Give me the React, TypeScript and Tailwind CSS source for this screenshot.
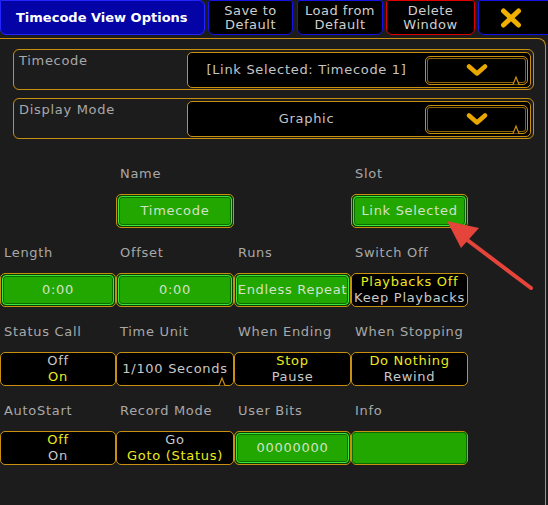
import type { ReactNode } from "react";

const FONT = { fontFamily: '"DejaVu Sans", "Noto Sans", sans-serif' };

type Cell =
  | null
  | { label: string; kind: "green"; text: string }
  | { label: string; kind: "info" }
  | { label: string; kind: "black"; lines: [string, boolean][]; notch?: boolean };

const Y = true;
const G = false;

const ROWS: Cell[][] = [
  [
    null,
    { label: "Name", kind: "green", text: "Timecode" },
    null,
    { label: "Slot", kind: "green", text: "Link Selected" },
  ],
  [
    { label: "Length", kind: "green", text: "0:00" },
    { label: "Offset", kind: "green", text: "0:00" },
    { label: "Runs", kind: "green", text: "Endless Repeat" },
    { label: "Switch Off", kind: "black", lines: [["Playbacks Off", Y], ["Keep Playbacks", G]] },
  ],
  [
    { label: "Status Call", kind: "black", lines: [["Off", G], ["On", Y]] },
    { label: "Time Unit", kind: "black", lines: [["1/100 Seconds", G]], notch: true },
    { label: "When Ending", kind: "black", lines: [["Stop", Y], ["Pause", G]] },
    { label: "When Stopping", kind: "black", lines: [["Do Nothing", Y], ["Rewind", G]] },
  ],
  [
    { label: "AutoStart", kind: "black", lines: [["Off", Y], ["On", G]] },
    { label: "Record Mode", kind: "black", lines: [["Go", G], ["Goto (Status)", Y]] },
    { label: "User Bits", kind: "green", text: "00000000" },
    { label: "Info", kind: "info" },
  ],
];

function Notch() {
  return (
    <svg className="absolute -bottom-px right-[6px]" width="10" height="10" viewBox="0 0 10 10">
      <path d="M0 9.5 H2 L5 2 L8 9.5 H10" fill="#000" stroke="#c99010" strokeWidth="1.2" />
    </svg>
  );
}

function Chevron() {
  return (
    <svg width="22" height="14" viewBox="0 0 22 14">
      <path d="M3 3.5 L11 10.5 L19 3.5" fill="none" stroke="#e8a600" strokeWidth="4.5" strokeLinecap="round" strokeLinejoin="round" />
    </svg>
  );
}

function HeaderBtn({ children, red }: { children: ReactNode; red?: boolean }) {
  return (
    <div
      className={`flex h-full flex-col items-center justify-center rounded-b-[6px] rounded-t-[3px] border bg-black text-[13px] leading-[14px] tracking-[0.5px] text-[#cfcfcf] ${
        red ? "border-[#e00000]" : "border-[#1414e6]"
      }`}
    >
      {children}
    </div>
  );
}

function Dropdown({ label, value }: { label: string; value: string }) {
  return (
    <div className="flex h-[41px] w-[521px] rounded-[6px] border border-[#c99010] p-[2px] pb-px">
      <div className="flex-1 pl-[3px] pt-[2px] leading-[14px] text-[#a8a8a8]">{label}</div>
      <div className="flex w-[344px] items-center rounded-[5px] border border-[#c99010] bg-black">
        <div className="flex-1 text-center text-[#c4c4c4]">{value}</div>
        <div className="relative mr-[2px] flex h-[29px] w-[103px] items-center justify-center rounded-[5px] border border-[#c99010] shadow-[inset_0_0_0_1px_#000,inset_0_0_0_2px_#8a6208]">
          <Chevron />
          <Notch />
        </div>
      </div>
    </div>
  );
}

function Button({ cell }: { cell: Exclude<Cell, null> }) {
  if (cell.kind === "green") {
    return (
      <div className="h-[34px] rounded-[5px] border border-[#c99010] bg-[#0a3c00] p-px">
        <div className="flex h-full items-center justify-center rounded-[4px] border border-[#3ee63e] bg-[#22a700] text-[#d2e2c8] shadow-[inset_0_0_0_1px_#0b6c00]">
          {cell.text}
        </div>
      </div>
    );
  }
  if (cell.kind === "info") {
    return (
      <div className="h-[34px] rounded-[5px] border border-[#c99010] p-0">
        <div className="h-full rounded-[4px] bg-[#22a700] shadow-[inset_0_0_0_1px_#0b6c00]" />
      </div>
    );
  }
  return (
    <div className="relative flex h-[34px] flex-col items-center justify-center rounded-[5px] border border-[#c99010] bg-black leading-4">
      {cell.lines.map(([t, y], i) => (
        <span key={i} className={y ? "text-[#eeea1c]" : "text-[#c8c8c8]"}>
          {t}
        </span>
      ))}
      {cell.notch && <Notch />}
    </div>
  );
}

export default function App() {
  return (
    <div
      className="relative h-[505px] w-[548px] overflow-hidden bg-[#1c1c1c] text-[13px] tracking-[0.7px]"
      style={FONT}
    >
      <header className="flex h-[35px] gap-[3px]">
        <div className="flex w-[205px] items-center rounded-b-[6px] rounded-tr-[6px] border border-[#2424ff] bg-[#0404a6] pl-[15px] text-[13px] font-bold tracking-normal text-white">
          Timecode View Options
        </div>
        <div className="w-[85px]">
          <HeaderBtn>
            <span>Save to</span>
            <span>Default</span>
          </HeaderBtn>
        </div>
        <div className="ml-px w-[86px]">
          <HeaderBtn>
            <span>Load from</span>
            <span>Default</span>
          </HeaderBtn>
        </div>
        <div className="w-[89px]">
          <HeaderBtn red>
            <span>Delete</span>
            <span>Window</span>
          </HeaderBtn>
        </div>
        <div className="flex-1">
          <div className="-mr-2 flex h-full items-center justify-center rounded-b-[6px] rounded-t-[3px] border border-[#1414e6] bg-black pr-3">
            <svg width="22" height="20" viewBox="0 0 22 20">
              <path d="M3.5 3 L18.5 17 M18.5 3 L3.5 17" stroke="#f0b000" strokeWidth="5" strokeLinecap="round" />
            </svg>
          </div>
        </div>
      </header>

      <div className="mt-[3px] h-[470px] w-[546px] rounded-tr-[8px] border-r border-t border-[#c99010] pt-[10px]">
        <div className="flex flex-col gap-[8px] pl-[13px]">
          <Dropdown label="Timecode" value="[Link Selected: Timecode 1]" />
          <Dropdown label="Display Mode" value="Graphic" />
        </div>

        <div className="mt-[10px] grid grid-cols-[116px_118px_117px_117px]">
          {ROWS.flat().map((cell, i) => (
            <div key={i} className="flex flex-col">
              <div className="h-[45px] pl-[4px] pt-[17px] leading-4 text-[#a8a8a8]">{cell?.label}</div>
              {cell ? <Button cell={cell} /> : <div className="h-[34px]" />}
            </div>
          ))}
        </div>
      </div>

      <svg className="pointer-events-none absolute left-0 top-0" width="548" height="505" viewBox="0 0 548 505">
        <line x1="531" y1="288" x2="458" y2="233" stroke="#e5443a" strokeWidth="4" strokeLinecap="round" />
        <polygon points="447,221 479,228 461,248" fill="#e5443a" />
      </svg>
    </div>
  );
}
